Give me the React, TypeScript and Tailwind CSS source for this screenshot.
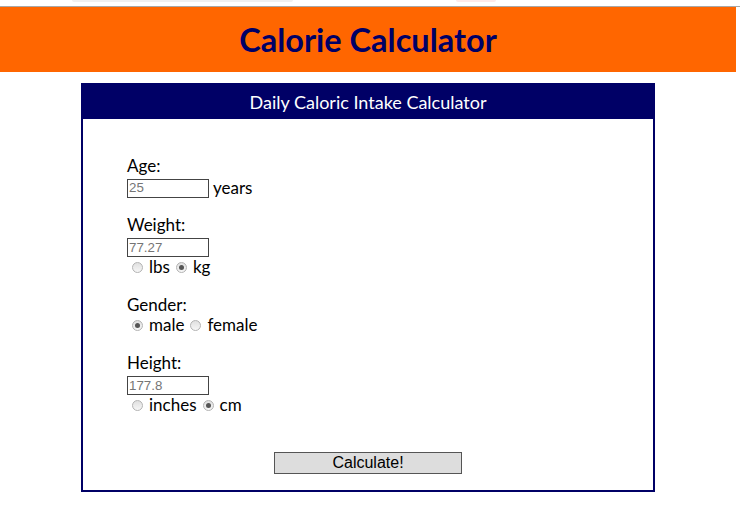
const FONT = "font-['Lato','Noto_Sans',sans-serif]";

function Radio({ checked, label }: { checked?: boolean; label: string }) {
  return (
    <span className="flex items-center">
      <span className="ml-[5px] mr-[6px] flex h-[11px] w-[11px] items-center justify-center rounded-full border border-[#b3b3b3] bg-gradient-to-b from-[#e0e0e0] to-[#f6f6f6]">
        {checked && <span className="h-[5px] w-[5px] rounded-full bg-[#555]" />}
      </span>
      <span>{label}</span>
    </span>
  );
}

function TextBox({ value }: { value: string }) {
  return (
    <div className="flex h-[19px] w-[82px] items-center border border-[#444] bg-white px-[1px] font-['Liberation_Sans',Arial,sans-serif] text-[13.33px] leading-none text-[#757575]">
      {value}
    </div>
  );
}

export default function App() {
  return (
    <div className={`min-h-[513px] w-[740px] bg-white ${FONT}`}>
      {/* browser chrome remnants */}
      <div className="relative h-[6px] bg-white">
        <div className="absolute left-[72px] top-0 h-[2px] w-[221px] rounded-b-full bg-[#f0f0f0]" />
        <div className="absolute left-[456px] top-0 h-[2px] w-[40px] rounded-b-full bg-[#fdeaea]" />
      </div>
      <div className="h-[1px] bg-[#a8a8a8]" />

      <div className="w-[736px]">
        <header className="flex h-[65px] items-center justify-center bg-[#ff6600]">
          <h1 className="pt-[2px] text-[32.5px] font-bold text-[#000066]">Calorie Calculator</h1>
        </header>

        <div className="mx-auto mt-[11px] flex h-[409px] w-[574px] flex-col border-2 border-t-0 border-[#000066]">
          <div className="-mx-[2px] flex h-[36px] items-center justify-center bg-[#000066] pt-[2px] text-[18px] text-white">
            Daily Caloric Intake Calculator
          </div>

          <div className="flex flex-col pl-[44px] pt-[37px] text-[17px] leading-[20px] text-black">
            <div className="h-[20px]">Age:</div>
            <div className="mt-[2px] flex items-center gap-[4px]">
              <TextBox value="25" />
              <span>years</span>
            </div>

            <div className="mt-[17px] h-[20px]">Weight:</div>
            <div className="mt-[3px]">
              <TextBox value="77.27" />
            </div>
            <div className="flex h-[20px] items-center gap-[1px]">
              <Radio label="lbs" />
              <Radio checked label="kg" />
            </div>

            <div className="mt-[18px] h-[20px]">Gender:</div>
            <div className="flex h-[20px] items-center gap-[1px]">
              <Radio checked label="male" />
              <Radio label="female" />
            </div>

            <div className="mt-[18px] h-[20px]">Height:</div>
            <div className="mt-[3px]">
              <TextBox value="177.8" />
            </div>
            <div className="flex h-[20px] items-center gap-[1px]">
              <Radio label="inches" />
              <Radio checked label="cm" />
            </div>
          </div>

          <div className="mt-[37px] flex justify-center">
            <button
              type="button"
              className="h-[22px] w-[188px] border border-[#555] bg-[#dddddd] font-['Liberation_Sans',Arial,sans-serif] text-[16px] leading-none text-black">
              Calculate!
            </button>
          </div>
        </div>
      </div>
    </div>
  );
}
